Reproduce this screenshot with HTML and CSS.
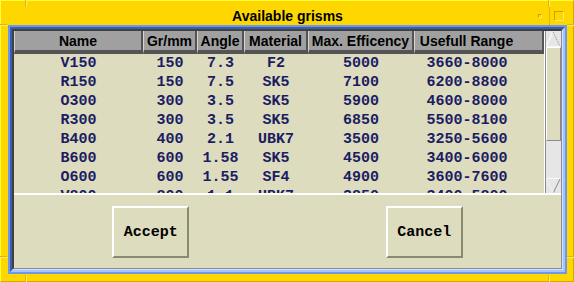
FILE: index.html
```html
<!DOCTYPE html>
<html>
<head>
    <title>Available grisms</title>
    <link rel="stylesheet" href="styles.css">
</head>
<body>
    <div class="window">
        <div class="titlebar">
            <span class="tb-pad"></span>
            <span class="title">Available grisms</span>
            <span class="tb-buttons">
                <span class="tb-min"><i></i></span>
                <span class="tb-max"><i></i></span>
            </span>
        </div>
        <div class="frame-outer">
            <div class="frame-inner">
                <div class="content-wrap">
                    <div class="content">
                        <div class="grid-pane">
                            <div class="table-view">
                                <table class="grisms">
                                    <thead>
                                        <tr>
                                            <th class="c-name">Name</th>
                                            <th class="c-gr">Gr/mm</th>
                                            <th class="c-angle">Angle</th>
                                            <th class="c-mat">Material</th>
                                            <th class="c-eff">Max. Efficency</th>
                                            <th class="c-range">Usefull Range</th>
                                        </tr>
                                    </thead>
                                    <tbody>
                                        <tr><td>V150</td><td>150</td><td>7.3</td><td>F2</td><td>5000</td><td class="c-range">3660-8000</td></tr>
                                        <tr><td>R150</td><td>150</td><td>7.5</td><td>SK5</td><td>7100</td><td class="c-range">6200-8800</td></tr>
                                        <tr><td>O300</td><td>300</td><td>3.5</td><td>SK5</td><td>5900</td><td class="c-range">4600-8000</td></tr>
                                        <tr><td>R300</td><td>300</td><td>3.5</td><td>SK5</td><td>6850</td><td class="c-range">5500-8100</td></tr>
                                        <tr><td>B400</td><td>400</td><td>2.1</td><td>UBK7</td><td>3500</td><td class="c-range">3250-5600</td></tr>
                                        <tr><td>B600</td><td>600</td><td>1.58</td><td>SK5</td><td>4500</td><td class="c-range">3400-6000</td></tr>
                                        <tr><td>O600</td><td>600</td><td>1.55</td><td>SF4</td><td>4900</td><td class="c-range">3600-7600</td></tr>
                                        <tr><td>V800</td><td>800</td><td>1.1</td><td>UBK7</td><td>3850</td><td class="c-range">3400-5800</td></tr>
                                    </tbody>
                                </table>
                            </div>
                            <div class="scrollbar">
                                <svg class="sb-arrow" width="15" height="16" viewBox="0 0 15 16">
                                    <path d="M6.5 1 L0.5 15" stroke="#ffffff" fill="none"/>
                                    <path d="M7 1 L14 15" stroke="#8a8a8a" stroke-dasharray="1 1" fill="none"/>
                                    <path d="M1 15.5 H14" stroke="#f8f8f8" fill="none"/>
                                </svg>
                                <div class="sb-thumb"></div>
                                <div class="sb-trough"></div>
                                <svg class="sb-arrow" width="15" height="15" viewBox="0 0 15 15">
                                    <path d="M1 0.5 H14" stroke="#f8f8f8" fill="none"/>
                                    <path d="M0.5 1 L7 14.5" stroke="#ffffff" stroke-dasharray="1 1" fill="none"/>
                                    <path d="M14 1 L7.5 14.5" stroke="#8a8a8a" fill="none"/>
                                </svg>
                            </div>
                        </div>
                        <div class="button-area">
                            <button class="dlg-btn">Accept</button>
                            <button class="dlg-btn">Cancel</button>
                        </div>
                    </div>
                </div>
            </div>
        </div>
    </div>
</body>
</html>
```

FILE: styles.css
```css
body {
    margin: 0;
    background: #ffd700;
    font-family: "Liberation Sans", Arial, sans-serif;
}

/* outer window manager frame */
.window {
    position: relative;
    width: 574px;
    height: 282px;
    box-sizing: border-box;
    display: flex;
    flex-direction: column;
    background: #ffd700;
    border: 1px solid;
    border-color: #ffff3c #d6a900 #d6a900 #ffff3c;
    padding: 0 6px 7px 7px;
}

/* resize corner marks */
.window::before {
    content: "";
    position: absolute;
    top: -1px;
    left: 24px;
    width: 1px;
    height: 7px;
    background: #e2b600;
    box-shadow: 1px 0 0 #ffec66, 523px 0 0 #e2b600, 524px 0 0 #ffec66,
        0 275px 0 #e2b600, 1px 275px 0 #ffec66, 523px 275px 0 #e2b600, 524px 275px 0 #ffec66;
}
.window::after {
    content: "";
    position: absolute;
    top: 23px;
    left: -1px;
    width: 7px;
    height: 1px;
    background: #e2b600;
    box-shadow: 0 1px 0 #ffec66, 567px 0 0 #e2b600, 567px 1px 0 #ffec66,
        0 232px 0 #e2b600, 0 233px 0 #ffec66, 567px 232px 0 #e2b600, 567px 233px 0 #ffec66;
}

.titlebar {
    margin-top: 6px;
    height: 18px;
    display: grid;
    grid-template-columns: 36px 1fr 36px;
    align-items: center;
}

.title {
    text-align: center;
    font-weight: bold;
    font-size: 14px;
    line-height: 18px;
    color: #000;
}

.tb-buttons {
    display: flex;
    height: 18px;
}
.tb-min, .tb-max {
    width: 18px;
    display: flex;
    align-items: center;
    justify-content: center;
}
.tb-max {
    border-left: 1px solid #e2b600;
    width: 17px;
}
.tb-min i, .tb-max i {
    display: block;
    box-sizing: border-box;
    border: 1px solid;
    border-color: #c9a300 #ffec66 #ffec66 #c9a300;
}
.tb-min i { width: 4px; height: 4px; }
.tb-max i { width: 10px; height: 10px; }

/* blue dialog frame */
.frame-outer {
    flex: 1;
    display: flex;
    border: 2px solid #6c98ec;
}
.frame-inner {
    flex: 1;
    display: flex;
    border: 2px solid;
    border-color: #3c5cac #a6c2ff #a6c2ff #3c5cac;
}
.content-wrap {
    flex: 1;
    display: flex;
    border: 1px solid;
    border-color: #404040 #d2e0ff #d2e0ff #404040;
}
.content {
    flex: 1;
    display: flex;
    flex-direction: column;
    background: #dddcbf;
    border: 1px solid;
    border-color: #404040 #8c8c8c #8c8c8c #404040;
}

/* table with scrollbar */
.grid-pane {
    height: 162px;
    display: flex;
    border-bottom: 2px solid #ffffff;
}
.table-view {
    flex: 1;
    overflow: hidden;
    border-right: 1px solid #ffffff;
}

.grisms {
    border-collapse: separate;
    border-spacing: 0;
    table-layout: fixed;
    width: 530px;
}
.grisms th {
    box-sizing: border-box;
    height: 23px;
    padding: 2px 0 0 0;
    background: #a0a0a0;
    border-left: 1px solid #d4d4d4;
    border-right: 2px solid #545454;
    border-bottom: 4px solid #545454;
    font-family: "Liberation Sans", Arial, sans-serif;
    font-weight: bold;
    font-size: 14px;
    line-height: 17px;
    color: #000;
    text-align: center;
    white-space: nowrap;
}
.grisms td {
    height: 18px;
    padding: 1px 0 0 0;
    font-family: "Liberation Mono", "Courier New", monospace;
    font-weight: bold;
    font-size: 15px;
    line-height: 18px;
    color: #1c1c62;
    text-align: center;
    white-space: nowrap;
}
.c-name { width: 129px; }
.c-gr { width: 54px; }
.c-angle { width: 47px; }
.c-mat { width: 64px; }
.c-eff { width: 106px; }
.grisms .c-range { width: 130px; padding-right: 24px; }

.scrollbar {
    width: 15px;
    display: flex;
    flex-direction: column;
    background: #e6e6e6;
    border-left: 1px solid #8c8c8c;
}
.sb-arrow {
    display: block;
    flex: none;
}
.sb-thumb {
    height: 94px;
    box-sizing: border-box;
    background: #dddcbf;
    border: 1px solid;
    border-color: #ffffff #8a8a8a #8a8a8a #ffffff;
}
.sb-trough {
    flex: 1;
}

/* dialog buttons */
.button-area {
    flex: 1;
    display: grid;
    grid-template-columns: 1fr 1fr;
    align-items: center;
    justify-items: center;
    padding-top: 1px;
}
.dlg-btn {
    width: 77px;
    height: 52px;
    box-sizing: border-box;
    padding: 0;
    background: #dddcbf;
    border: 2px solid;
    border-color: #ffffff #8a8a72 #8a8a72 #ffffff;
    font-family: "Liberation Mono", "Courier New", monospace;
    font-weight: bold;
    font-size: 15px;
    color: #000;
}
```
